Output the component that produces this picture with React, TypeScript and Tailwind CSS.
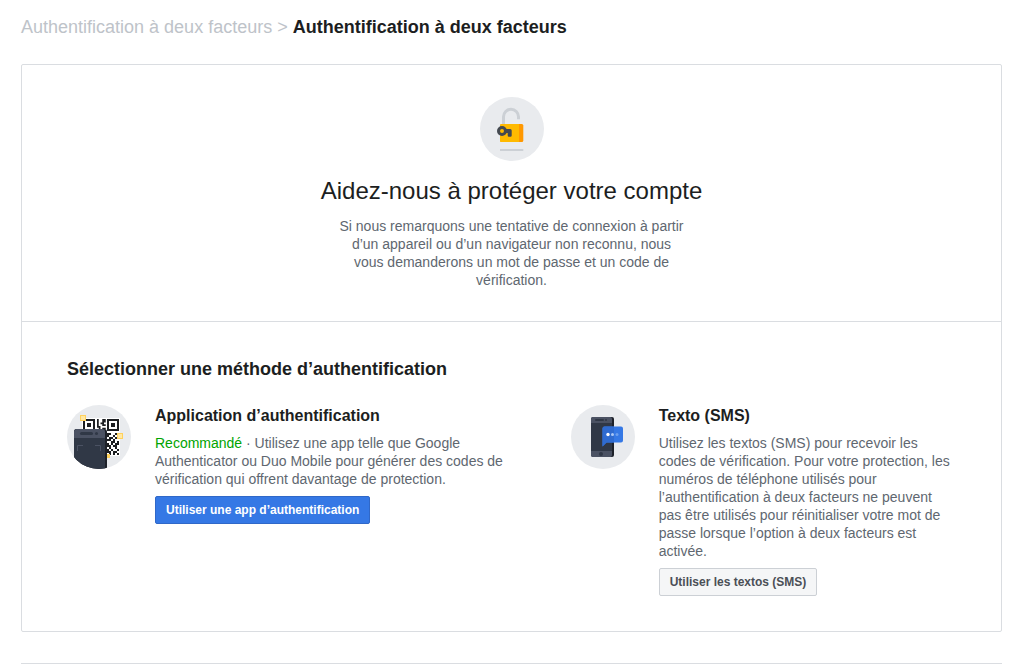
import type { ReactNode } from "react";

const qrModules = [
  "#..##.",
  "#..##.",
  "#.##..",
  "#..##.",
  "##....",
  ".#.##.",
];

const qrCorner = [
  "##..##",
  "#..#.#",
  ".##.##",
  "##.#..",
  "..##.#",
  "#.#.##",
  "##.##.",
  ".#..#.",
  "#.#..#",
  "##.##.",
  ".#.#.#",
];

function qrPath(rows: string[], left: number, top: number, size: number) {
  return rows
    .flatMap((row, y) =>
      row.split("").map((cell, x) => (cell === "#" ? `M${left + x * size} ${top + y * size}h${size}v${size}h-${size}z` : ""))
    )
    .join("");
}

function LockIcon() {
  return (
    <svg viewBox="0 0 64 64" className="size-16" aria-hidden="true">
      <circle cx="32" cy="32" r="32" fill="#e9ebee" />
      <path
        d="M23.5 27v-7.2a7.5 7.5 0 0 1 15 0V22.3"
        fill="none"
        stroke="#ccd0d5"
        strokeWidth="3"
      />
      <rect x="20" y="27" width="23.3" height="18" rx="1.5" fill="#ff9800" />
      <path d="M21.5 27H39v18H21.5a1.5 1.5 0 0 1-1.5-1.5v-15a1.5 1.5 0 0 1 1.5-1.5z" fill="#ffba00" />
      <circle cx="22" cy="34" r="3.5" fill="none" stroke="#444950" strokeWidth="3" />
      <path
        d="M26 32h4.2a1.5 1.5 0 0 1 1.5 1.5v5a1.2 1.2 0 0 1-1.2 1.2h-1.6a1.2 1.2 0 0 1-1.2-1.2v-2.5H26z"
        fill="#444950"
      />
      <rect x="20" y="52" width="23.3" height="2" fill="#ccd0d5" />
    </svg>
  );
}

function QrIcon() {
  return (
    <svg viewBox="0 0 64 64" className="size-16 shrink-0" aria-hidden="true">
      <clipPath id="qr-circle">
        <circle cx="32" cy="32" r="32" />
      </clipPath>
      <circle cx="32" cy="32" r="32" fill="#e9ebee" />
      <g clipPath="url(#qr-circle)">
        <rect x="15" y="13" width="38" height="38" fill="#fff" />
        <g fill="none" stroke="#1c1e21" strokeWidth="2">
          <rect x="17" y="15" width="10" height="10" />
          <rect x="41" y="15" width="10" height="10" />
        </g>
        <g fill="#1c1e21">
          <rect x="20" y="18" width="4" height="4" />
          <rect x="44" y="18" width="4" height="4" />
          <path d={qrPath(qrModules, 30, 14, 1.75)} />
          <path d={qrPath(qrCorner, 40, 28, 2)} />
        </g>
        <rect x="13.5" y="10.5" width="5" height="5" fill="#ffe7a3" stroke="#ffd15c" />
        <rect x="50.5" y="28.5" width="5" height="5" fill="#ffe7a3" stroke="#ffd15c" />
        <rect x="38" y="49" width="5" height="4" fill="#ffd15c" />
        <rect x="7" y="24" width="33" height="44" rx="3" fill="#1d2129" />
        <rect x="7" y="24" width="31" height="44" rx="3" fill="#303846" />
        <path d="M7 33v-6a3 3 0 0 1 3-3h25a3 3 0 0 1 3 3v6z" fill="#4b5263" />
        <rect x="13" y="27" width="13" height="3" rx="1.5" fill="#303846" />
        <circle cx="29.5" cy="28.5" r="1.5" fill="#303846" />
        <path d="M10.5 46v-5.5H16M28 40.5h5.5V46" fill="none" stroke="#4b5263" />
      </g>
    </svg>
  );
}

function SmsIcon() {
  return (
    <svg viewBox="0 0 64 64" className="size-16 shrink-0" aria-hidden="true">
      <circle cx="32" cy="32" r="32" fill="#e9ebee" />
      <rect x="22" y="12" width="21" height="40" rx="2" fill="#1d2129" />
      <rect x="20" y="12" width="21" height="40" rx="2" fill="#303846" />
      <path d="M20 18v-4a2 2 0 0 1 2-2h17a2 2 0 0 1 2 2v4zM20 46h21v4a2 2 0 0 1-2 2H22a2 2 0 0 1-2-2z" fill="#4b5263" />
      <rect x="24" y="14" width="9" height="2" rx="1" fill="#303846" />
      <circle cx="35" cy="15" r="1" fill="#303846" />
      <circle cx="30" cy="49" r="2" fill="#303846" />
      <path d="M33.5 21.5H50a2 2 0 0 1 2 2v12a2 2 0 0 1-2 2H35.5l-4 4V23.5a2 2 0 0 1 2-2z" fill="#3578e5" />
      <path d="M33.5 21.5H43v16h-7.5l-4 4V23.5a2 2 0 0 1 2-2z" fill="#2f6bd0" />
      <circle cx="37" cy="29.5" r="1.7" fill="#fff" />
      <circle cx="41.5" cy="29.5" r="1.5" fill="#a9c6f5" />
      <circle cx="46" cy="29.5" r="1.5" fill="#6c9fee" />
    </svg>
  );
}

type MethodProps = {
  icon: ReactNode;
  title: string;
  action: string;
  primary?: boolean;
  children: ReactNode;
};

function Method({ icon, title, action, primary, children }: MethodProps) {
  return (
    <div className="flex items-start gap-6">
      {icon}
      <div className="min-w-0 pr-1">
        <h3 className="text-[16px] leading-[22px] font-bold text-[#1c1e21]">{title}</h3>
        <p className="mt-[7px] mb-2 text-[14px] leading-[18px] text-[#606770]">{children}</p>
        <button
          type="button"
          className={
            primary
              ? "h-7 rounded-xs border border-[#3068c8] bg-[#3578e5] px-2.5 text-[12px] font-bold text-white"
              : "h-7 rounded-xs border border-[#ccd0d5] bg-[#f5f6f7] px-2.5 text-[12px] font-bold text-[#4b4f56]"
          }
        >
          {action}
        </button>
      </div>
    </div>
  );
}

export default function App() {
  return (
    <main className="bg-white pt-4 pr-5 pl-[21px] font-['Liberation_Sans',Arial,sans-serif]">
      <h1 className="text-[18px] leading-[22px] font-bold text-[#1c1e21]">
        <a href="#" className="font-normal text-[#bec3c9]">
          Authentification à deux facteurs
        </a>
        <span className="font-normal text-[#bec3c9]"> &gt; </span>
        Authentification à deux facteurs
      </h1>

      <div className="mt-[26px] rounded-xs border border-[#dadde1]">
        <section className="flex flex-col items-center border-b border-[#dadde1] py-8 text-center">
          <LockIcon />
          <h2 className="mt-4 text-[24px] leading-7 text-[#1c1e21]">Aidez-nous à protéger votre compte</h2>
          <p className="mt-3 max-w-[350px] text-[14px] leading-[18px] text-[#606770]">
            Si nous remarquons une tentative de connexion à partir d’un appareil ou d’un navigateur non reconnu, nous
            vous demanderons un mot de passe et un code de vérification.
          </p>
        </section>

        <section className="px-[45px] pt-9 pb-[35px]">
          <h2 className="text-[18px] leading-[22px] font-bold text-[#1c1e21]">
            Sélectionner une méthode d’authentification
          </h2>
          <div className="mt-[25px] grid grid-cols-[5fr_4fr] gap-[22px]">
            <Method
              icon={<QrIcon />}
              title="Application d’authentification"
              action="Utiliser une app d’authentification"
              primary
            >
              <span className="text-[#00a400]">Recommandé</span> · Utilisez une app telle que Google Authenticator ou
              Duo Mobile pour générer des codes de vérification qui offrent davantage de protection.
            </Method>
            <Method icon={<SmsIcon />} title="Texto (SMS)" action="Utiliser les textos (SMS)">
              Utilisez les textos (SMS) pour recevoir les codes de vérification. Pour votre protection, les numéros de
              téléphone utilisés pour l’authentification à deux facteurs ne peuvent pas être utilisés pour
              réinitialiser votre mot de passe lorsque l’option à deux facteurs est activée.
            </Method>
          </div>
        </section>
      </div>

      <hr className="mt-[31px] border-[#dadde1]" />
    </main>
  );
}
